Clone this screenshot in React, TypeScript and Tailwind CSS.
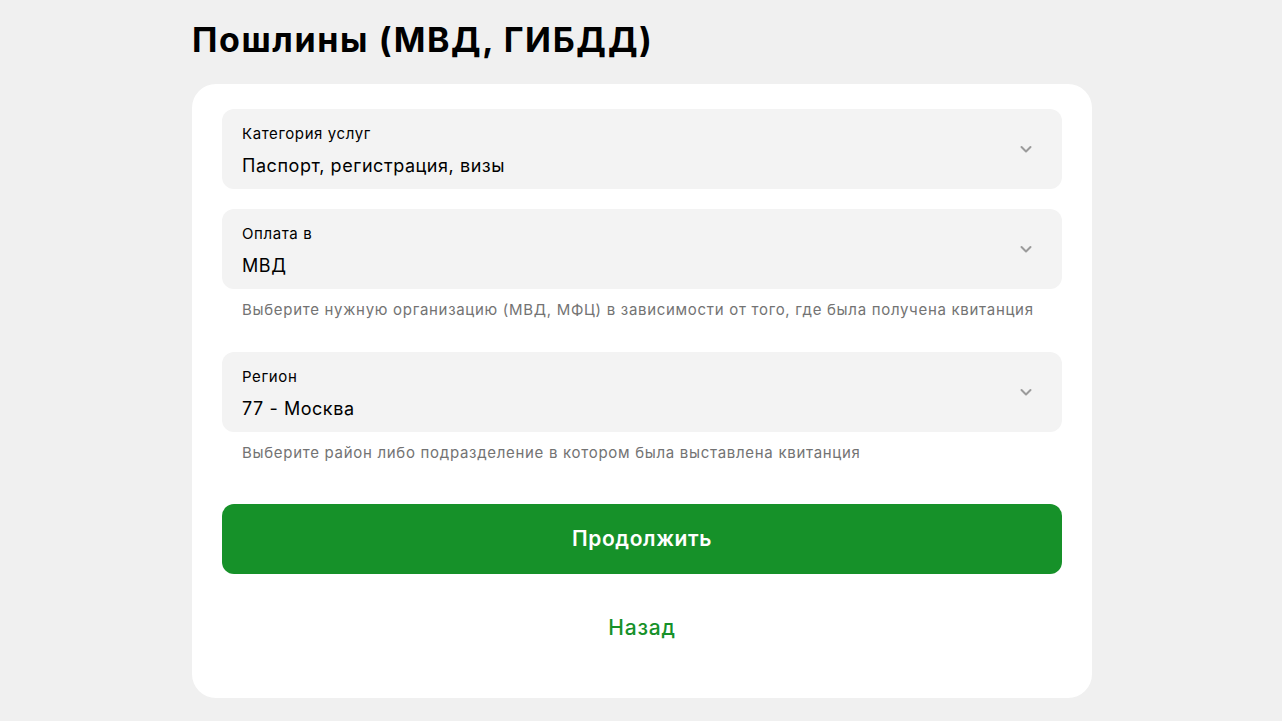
import React from "react";

function Chevron() {
  return (
    <svg width="16" height="16" viewBox="0 0 16 16" fill="none" className="-mt-[4px] shrink-0">
      <path d="M3.5 6l4.5 4.5L12.5 6" stroke="#9b9b9b" strokeWidth="2" strokeLinecap="round" strokeLinejoin="round" />
    </svg>
  );
}

function Field({ label, value }: { label: string; value: string }) {
  return (
    <div className="flex h-[80px] items-center justify-between rounded-[12px] bg-[#f3f3f3] pl-[20px] pr-[28px] pt-[4px]">
      <div className="flex flex-col">
        <span className="text-[15px] leading-[20px] tracking-[0.6px] text-black">{label}</span>
        <span className="mt-[10px] text-[18px] leading-[24px] tracking-[0.55px] text-black">{value}</span>
      </div>
      <Chevron />
    </div>
  );
}

export default function App() {
  return (
    <div className="min-h-[721px] bg-[#f0f0f0]" style={{ fontFamily: "Inter, 'Noto Sans', sans-serif" }}>
      <div className="ml-[192px] w-[900px] pt-[18px]">
        <h1 className="text-[34px] font-bold leading-[44px] tracking-[1.6px] text-black">Пошлины (МВД, ГИБДД)</h1>
        <div className="mt-[22px] rounded-[24px] bg-white px-[30px] pt-[25px] pb-[56px]">
          <Field label="Категория услуг" value="Паспорт, регистрация, визы" />
          <div className="mt-[20px]">
            <Field label="Оплата в" value="МВД" />
          </div>
          <p className="mt-[11px] px-[20px] text-[15px] leading-[20px] tracking-[0.7px] text-[#737373]">
            Выберите нужную организацию (МВД, МФЦ) в зависимости от того, где была получена квитанция
          </p>
          <div className="mt-[32px]">
            <Field label="Регион" value="77 - Москва" />
          </div>
          <p className="mt-[11px] px-[20px] text-[15px] leading-[20px] tracking-[0.7px] text-[#737373]">
            Выберите район либо подразделение в котором была выставлена квитанция
          </p>
          <button className="mt-[41px] flex h-[70px] w-full items-center justify-center rounded-[12px] bg-[#169129] text-[21px] font-semibold tracking-[0.6px] text-white">
            Продолжить
          </button>
          <div className="mt-[40px] text-center text-[21px] font-medium leading-[28px] tracking-[0.8px] text-[#169129]">Назад</div>
        </div>
      </div>
    </div>
  );
}
